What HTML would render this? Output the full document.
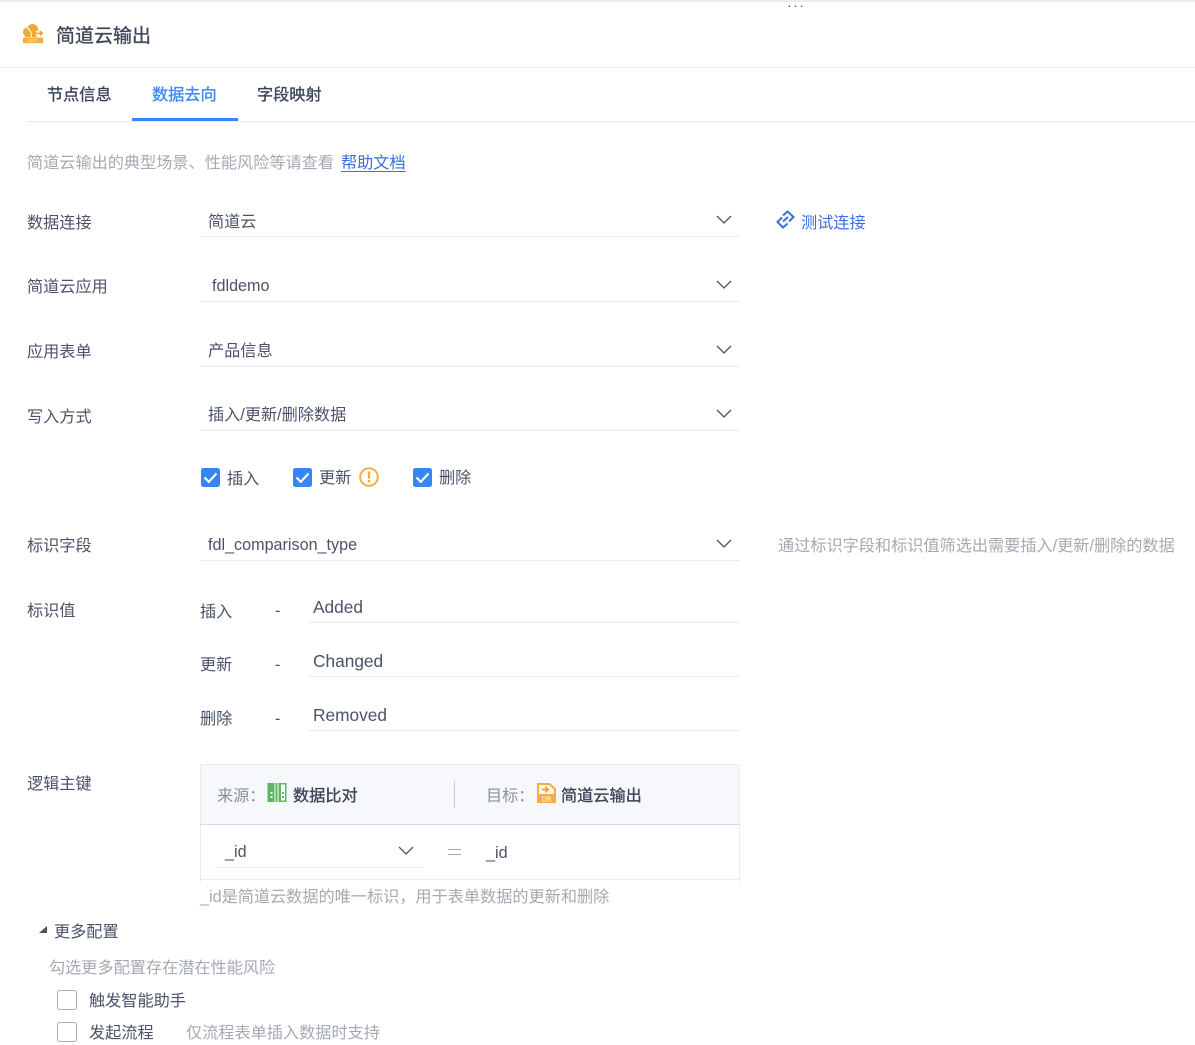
<!DOCTYPE html>
<html lang="zh"><head><meta charset="utf-8">
<style>
html,body{margin:0;padding:0;background:#fff}
body{width:1195px;height:1042px;position:relative;overflow:hidden;font-family:"Liberation Sans","Noto Sans CJK SC",sans-serif;font-size:16.17px;color:#4a5368}
.t{position:absolute;white-space:nowrap;line-height:24px}
.l{position:absolute;background:#e9ebef;height:1px}
.g{color:#a4a9b3}
.chev{position:absolute;width:16px;height:10px}
.cb{position:absolute;width:19px;height:19px;background:#3685f2;border-radius:2.5px}
.ub{position:absolute;width:17.500px;height:18px;border:1px solid #a9adb6;border-radius:3px;background:#fff}
.b{color:#3d4759;-webkit-text-stroke:.35px #3d4759}
</style></head><body>
<div class="l" style="left:0;top:0;width:1195px;height:2px;background:#ebebf0"></div>
<div class="t" style="left:787px;top:-7px;color:#555;font-size:14px;letter-spacing:1.500px">···</div>

<svg style="position:absolute;left:22px;top:23px" width="22" height="21" viewBox="0 0 22 21">
<circle cx="6" cy="9" r="5" fill="#eea93c"/><circle cx="10.500" cy="6.500" r="5.500" fill="#eea93c"/><circle cx="14" cy="9.500" r="3.800" fill="#eea93c"/><rect x="3" y="9" width="12" height="5" fill="#eea93c"/>
<path d="M4.500 4.500c3 1.500 5 4.500 5 9.500" fill="none" stroke="#fff" stroke-width="1"/>
<path d="M14 10.300h7" fill="none" stroke="#fff" stroke-width="5"/>
<path d="M14 10.300h6.500M18 8l2.300 2.300-2.300 2.300" fill="none" stroke="#eea93c" stroke-width="1.600"/>
<rect x="1" y="14.500" width="20" height="5.700" fill="#f0ae45"/>
<text x="11" y="19.200" text-anchor="middle" font-size="4.200" fill="#fff" font-family="Liberation Sans" letter-spacing=".7">JDY</text>
</svg>
<div class="t b" style="left:56px;top:25px;font-size:19px">简道云输出</div>
<div class="l" style="left:0;top:67px;width:1195px"></div>

<div class="t b" style="left:47px;top:83px">节点信息</div>
<div class="t" style="left:152px;top:83px;color:#3f8af2;-webkit-text-stroke:.35px #3f8af2">数据去向</div>
<div class="t b" style="left:257px;top:83px">字段映射</div>
<div class="l" style="left:27px;top:121px;width:1168px"></div>
<div style="position:absolute;left:132px;top:118px;width:106px;height:3px;background:#3685f2"></div>

<div class="t g" style="left:27px;top:151px">简道云输出的典型场景、性能风险等请查看</div>
<div class="t" style="left:341px;top:151px;color:#3a6fe0;text-decoration:underline;text-underline-offset:3px">帮助文档</div>

<div class="t" style="left:27px;top:211px">数据连接</div>
<div class="t" style="left:208px;top:210px">简道云</div>
<div class="l" style="left:200px;top:236px;width:540px"></div>
<svg class="chev" style="left:716px;top:215px" viewBox="0 0 16 10"><path d="M1 1l7 7 7-7" fill="none" stroke="#4a5368" stroke-width="1.300"/></svg>

<svg style="position:absolute;left:776px;top:210px" width="19" height="19" viewBox="0 0 19 19" fill="none" stroke="#3a6fe0" stroke-width="2"><path d="M7 5.500L11.500 1.500 17.500 7 13 11.500M11.500 13.500L7 17.500 1.500 12 6 7.500"/><path d="M7 11.500L12 7"/></svg>
<div class="t" style="left:801px;top:211px;color:#3a6fe0">测试连接</div>

<div class="t" style="left:27px;top:275px">简道云应用</div>
<div class="t" style="left:212px;top:274px">fdldemo</div>
<div class="l" style="left:200px;top:301px;width:540px"></div>
<svg class="chev" style="left:716px;top:280px" viewBox="0 0 16 10"><path d="M1 1l7 7 7-7" fill="none" stroke="#4a5368" stroke-width="1.300"/></svg>

<div class="t" style="left:27px;top:340px">应用表单</div>
<div class="t" style="left:208px;top:339px">产品信息</div>
<div class="l" style="left:200px;top:366px;width:540px"></div>
<svg class="chev" style="left:716px;top:345px" viewBox="0 0 16 10"><path d="M1 1l7 7 7-7" fill="none" stroke="#4a5368" stroke-width="1.300"/></svg>

<div class="t" style="left:27px;top:405px">写入方式</div>
<div class="t" style="left:208px;top:403px">插入/更新/删除数据</div>
<div class="l" style="left:200px;top:430px;width:540px"></div>
<svg class="chev" style="left:716px;top:409px" viewBox="0 0 16 10"><path d="M1 1l7 7 7-7" fill="none" stroke="#4a5368" stroke-width="1.300"/></svg>

<div class="cb" style="left:201px;top:468px"><svg width="19" height="19" viewBox="0 0 19 19"><path d="M3.500 9.500l4.300 4.300 7.700-8.300" fill="none" stroke="#fff" stroke-width="2.100"/></svg></div>
<div class="t" style="left:227px;top:467px">插入</div>
<div class="cb" style="left:293px;top:468px"><svg width="19" height="19" viewBox="0 0 19 19"><path d="M3.500 9.500l4.300 4.300 7.700-8.300" fill="none" stroke="#fff" stroke-width="2.100"/></svg></div>
<div class="t" style="left:319px;top:466px">更新</div>
<svg style="position:absolute;left:359px;top:467px" width="20" height="20" viewBox="0 0 20 20"><circle cx="10" cy="10" r="8.800" fill="none" stroke="#f0ae45" stroke-width="2"/><rect x="8.800" y="4.500" width="2.400" height="7.300" fill="#f0ae45"/><rect x="8.800" y="13" width="2.400" height="2.400" fill="#f0ae45"/></svg>
<div class="cb" style="left:413px;top:468px"><svg width="19" height="19" viewBox="0 0 19 19"><path d="M3.500 9.500l4.300 4.300 7.700-8.300" fill="none" stroke="#fff" stroke-width="2.100"/></svg></div>
<div class="t" style="left:439px;top:466px">删除</div>

<div class="t" style="left:27px;top:534px">标识字段</div>
<div class="t" style="left:208px;top:533px">fdl_comparison_type</div>
<div class="l" style="left:200px;top:560px;width:540px"></div>
<svg class="chev" style="left:716px;top:539px" viewBox="0 0 16 10"><path d="M1 1l7 7 7-7" fill="none" stroke="#4a5368" stroke-width="1.300"/></svg>
<div class="t g" style="left:778px;top:534px">通过标识字段和标识值筛选出需要插入/更新/删除的数据</div>

<div class="t" style="left:27px;top:599px">标识值</div>
<div class="t" style="left:200px;top:600px">插入</div>
<div class="t" style="left:275px;top:599px">-</div>
<div class="t" style="left:313px;top:595px;font-size:17.300px">Added</div>
<div class="l" style="left:308px;top:622px;width:432px"></div>
<div class="t" style="left:200px;top:653px">更新</div>
<div class="t" style="left:275px;top:653px">-</div>
<div class="t" style="left:313px;top:649px;font-size:17.300px">Changed</div>
<div class="l" style="left:308px;top:676px;width:432px"></div>
<div class="t" style="left:200px;top:707px">删除</div>
<div class="t" style="left:275px;top:707px">-</div>
<div class="t" style="left:313px;top:703px;font-size:17.300px">Removed</div>
<div class="l" style="left:308px;top:730px;width:432px"></div>

<div class="t" style="left:27px;top:772px">逻辑主键</div>
<div style="position:absolute;left:200px;top:764px;width:538px;height:59px;background:#f6f8fc;border:1px solid #e9ebef;border-bottom:1px solid #d8dbe4"></div>
<div style="position:absolute;left:200px;top:825px;width:1px;height:57px;background:#e9ebef"></div>
<div style="position:absolute;left:739px;top:825px;width:1px;height:57px;background:#e9ebef"></div>
<div class="l" style="left:200px;top:879px;width:540px"></div>
<div class="t" style="left:217px;top:784px;color:#8b909b">来源：</div>
<svg style="position:absolute;left:267px;top:783px" width="20" height="19" viewBox="0 0 20 19"><rect x="0.500" y="0" width="19" height="19" fill="#5fb562"/><rect x="7.500" y="0" width="1" height="19" fill="#fff"/><rect x="10.500" y="0" width="1" height="19" fill="#fff"/><rect x="14" y="1.500" width="4" height="16" fill="#fff"/><rect x="3.500" y="9" width="2" height="2" fill="#fff"/><rect x="3.500" y="13" width="2" height="2" fill="#fff"/><rect x="15" y="9" width="2" height="2" fill="#5fb562"/><rect x="15" y="13" width="2" height="2" fill="#5fb562"/></svg>
<div class="t b" style="left:293px;top:784px">数据比对</div>
<div style="position:absolute;left:454px;top:781px;width:1px;height:27px;background:#c9ccd3"></div>
<div class="t" style="left:486px;top:784px;color:#8b909b">目标：</div>
<svg style="position:absolute;left:537px;top:783px" width="19" height="20" viewBox="0 0 19 20"><path d="M1 1h11.500L18 6v6H1z" fill="#fdf4e4" stroke="#f0ae45" stroke-width="2"/><path d="M5 6.500h6M8.500 3.800L11.200 6.500 8.500 9.200" fill="none" stroke="#e9a035" stroke-width="1.700"/><rect x="0" y="11" width="19" height="9" fill="#f0ae45"/><text x="9.500" y="18.300" text-anchor="middle" font-size="7" fill="#fff" font-family="Liberation Sans">DB</text></svg>
<div class="t b" style="left:561px;top:784px">简道云输出</div>

<div class="t" style="left:225px;top:840px">_id</div>
<div class="l" style="left:215px;top:867px;width:207px"></div>
<svg class="chev" style="left:398px;top:846px" viewBox="0 0 16 10"><path d="M1 1l7 7 7-7" fill="none" stroke="#4a5368" stroke-width="1.300"/></svg>
<div style="position:absolute;left:448px;top:849px;width:13px;height:4px;border-top:1px solid #a4a9b3;border-bottom:1px solid #a4a9b3"></div>
<div class="t" style="left:486px;top:841px">_id</div>
<div class="t g" style="left:200px;top:885px">_id是简道云数据的唯一标识，用于表单数据的更新和删除</div>

<svg style="position:absolute;left:39px;top:926px" width="8" height="8" viewBox="0 0 8 8"><path d="M0 7h8V0z" fill="#4a5368"/></svg>
<div class="t" style="left:54px;top:920px">更多配置</div>
<div class="t g" style="left:49px;top:956px">勾选更多配置存在潜在性能风险</div>
<div class="ub" style="left:57px;top:990px"></div>
<div class="t" style="left:89px;top:989px">触发智能助手</div>
<div class="ub" style="left:57px;top:1022px"></div>
<div class="t" style="left:89px;top:1021px">发起流程</div>
<div class="t g" style="left:186px;top:1021px">仅流程表单插入数据时支持</div>
</body></html>
